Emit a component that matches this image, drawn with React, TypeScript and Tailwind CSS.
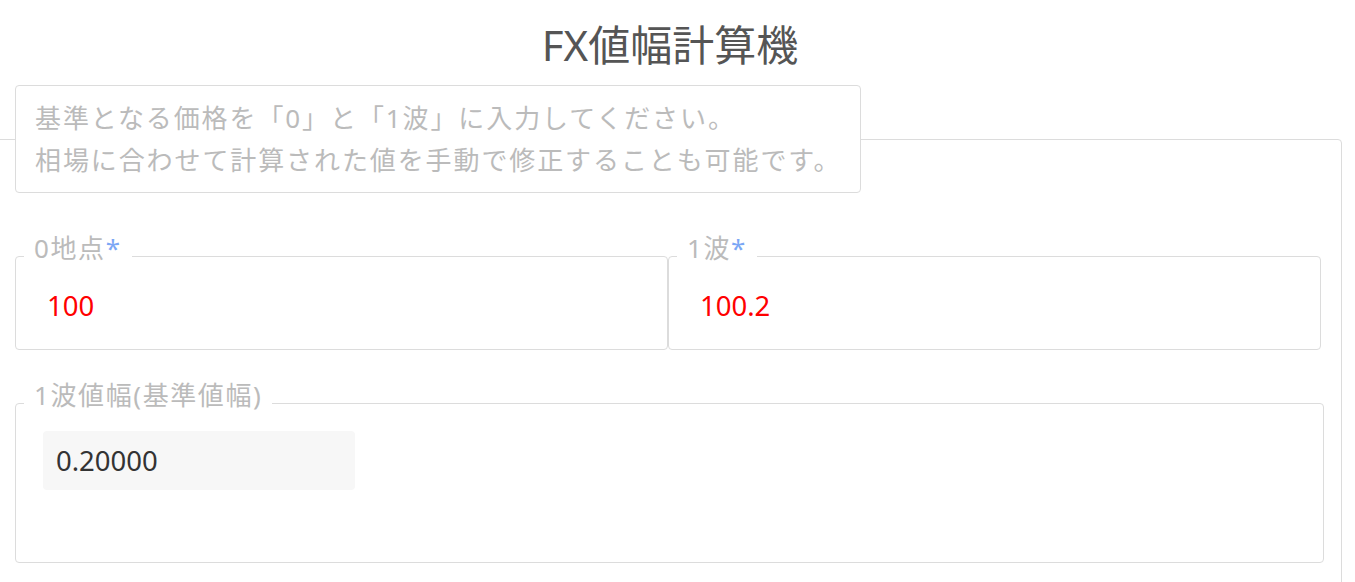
import React from 'react'

const font = { fontFamily: '"Noto Sans", "Noto Sans CJK JP", sans-serif' }

interface FieldProps {
  label: string
  required?: boolean
  children: React.ReactNode
  className?: string
}

const Field: React.FC<FieldProps> = ({ label, required, children, className }) => (
  <fieldset className={`border border-[#dcdcdc] rounded-[4px] pl-[8px] ${className ?? ''}`}>
    <legend className="px-[10px] pb-[16px] text-[26px] leading-[26px] tracking-[1.6px] text-[#bbbbbb]">
      {label}
      {required && <span className="text-[#7ba7f5]">*</span>}
    </legend>
    {children}
  </fieldset>
)

export default function App() {
  return (
    <div className="w-[1355px] h-[582px] overflow-hidden bg-white" style={font}>
      <h1 className="pt-[24px] w-[1340px] text-center text-[42px] leading-[42px] font-normal text-[#555555]">
        FX値幅計算機
      </h1>

      <fieldset className="-ml-[16px] mt-[19px] w-[1358px] border border-[#dcdcdc] rounded-[4px] pl-[30px] pr-[17px] pb-8">
        <legend className="border border-[#dcdcdc] rounded-[4px] bg-white pl-[19px] pr-[10px] py-[11px] w-[846px] text-[26px] leading-[42px] tracking-[1.9px] text-[#bbbbbb]">
          基準となる価格を「0」と「1波」に入力してください。
          <br />
          相場に合わせて計算された値を手動で修正することも可能です。
        </legend>

        <div className="mt-[42px] grid grid-cols-2 w-[1306px]">
          <Field label="0地点" required>
            <div className="pl-[23px] pt-[9px] pb-[24px] text-[27.5px] leading-[39px] text-[#ff0000]">100</div>
          </Field>
          <Field label="1波" required>
            <div className="pl-[23px] pt-[9px] pb-[24px] text-[27.5px] leading-[39px] text-[#ff0000]">100.2</div>
          </Field>
        </div>

        <Field label="1波値幅(基準値幅)" className="mt-[32px]">
          <div className="pl-[19px] pt-[7px] pb-[72px]">
            <div className="w-[312px] rounded-[4px] bg-[#f7f7f7] px-[13px] py-[10px] text-[27.5px] leading-[39px] text-[#333333]">
              0.20000
            </div>
          </div>
        </Field>
      </fieldset>
    </div>
  )
}
